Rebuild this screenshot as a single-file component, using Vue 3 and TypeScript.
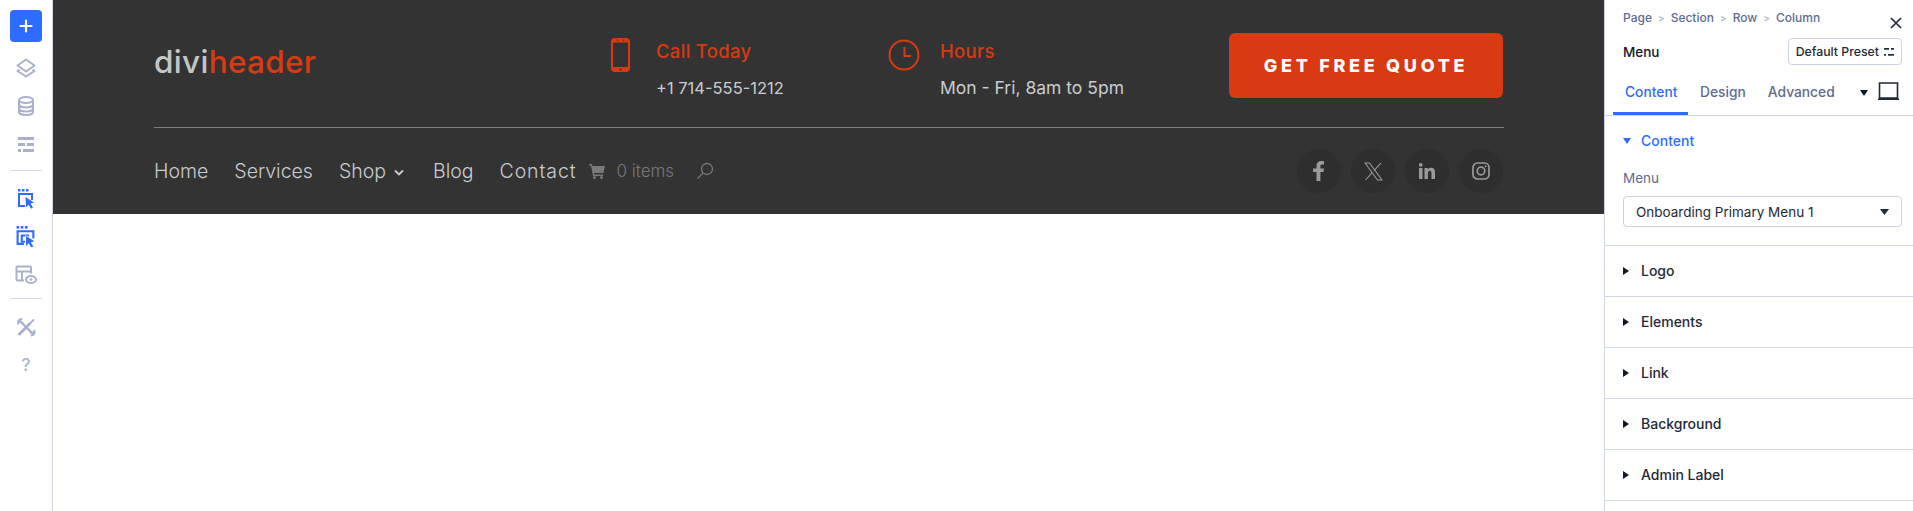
<script setup lang="ts">
const navItems = [
  { label: 'Home', caret: false },
  { label: 'Services', caret: false },
  { label: 'Shop', caret: true },
  { label: 'Blog', caret: false },
  { label: 'Contact', caret: false },
]
const sections = ['Logo', 'Elements', 'Link', 'Background', 'Admin Label']
const crumbs = ['Page', 'Section', 'Row', 'Column']
</script>

<template>
  <div class="app">
    <aside class="rail">
      <button class="add" type="button" aria-label="Add">
        <svg width="14" height="14" viewBox="0 0 14 14"><path d="M7 1.500v11M1.500 7h11" stroke="#fff" stroke-width="2.200" stroke-linecap="round" /></svg>
      </button>
      <div class="rail-group first">
        <svg class="ri" viewBox="0 0 20 20" fill="none" stroke="#a9b1cd" stroke-width="2" stroke-linejoin="round"><path d="M10 1.500l8.500 6-8.500 6-8.500-6z" /><path d="M3.500 11.500L1.500 13l8.500 5.500L18.500 13l-2-1.500" /></svg>
        <svg class="ri" viewBox="0 0 20 20" fill="none" stroke="#a9b1cd" stroke-width="2"><ellipse cx="10" cy="4" rx="7" ry="3" /><path d="M3 4v12c0 1.700 3.100 3 7 3s7-1.300 7-3V4M3 8.500c0 1.700 3.100 3 7 3s7-1.300 7-3M3 12.500c0 1.700 3.100 3 7 3s7-1.300 7-3" /></svg>
        <svg class="ri" viewBox="0 0 20 20" fill="#a9b1cd"><rect x="2" y="3" width="16" height="3" /><rect x="2" y="9" width="7" height="3" /><rect x="11" y="9" width="7" height="3" /><rect x="2" y="15" width="3" height="3" /><rect x="7" y="15" width="11" height="3" /></svg>
      </div>
      <hr class="rail-rule rule-a" />
      <div class="rail-group second">
        <svg class="ri" viewBox="0 0 20 20" fill="#2e6bff"><rect x="2" y="0" width="2.500" height="2.500" /><rect x="6" y="0" width="2.500" height="2.500" /><rect x="10" y="0" width="2.500" height="2.500" /><path d="M2 4h15v7h-2V6H4v10h5v2H2z" /><path stroke="#fff" stroke-width="1" paint-order="stroke" d="M9.500 8l8.500 5.500-3.500 1 2.500 4-2 1.200-2.300-4-2.700 2.500z" /></svg>
        <svg class="ri wide" viewBox="0 0 20 20" fill="#2e6bff"><rect x="1" y="0" width="2.500" height="2.500" /><rect x="5" y="0" width="2.500" height="2.500" /><rect x="9" y="0" width="2.500" height="2.500" /><path d="M1 4h17v8h-2V6H3v10h5v2H1z" /><path d="M5 8h8v2H7v4h2v2H5z" /><path stroke="#fff" stroke-width="1" paint-order="stroke" d="M10 9.500l8 5-3.500 1 2.500 4-2 1-2.300-4-2.700 2.500z" /></svg>
        <svg class="ri wide" viewBox="0 0 22 20" fill="none" stroke="#a9b1cd" stroke-width="2"><path d="M9 16H2.500a1 1 0 0 1-1-1V3a1 1 0 0 1 1-1H15a1 1 0 0 1 1 1v6M1.500 7H16M7 7v9" /><ellipse cx="16" cy="15" rx="5" ry="3.500" /><circle cx="16" cy="15" r="1.300" fill="#a9b1cd" stroke="none" /></svg>
      </div>
      <hr class="rail-rule rule-b" />
      <div class="rail-group third">
        <svg class="ri" viewBox="0 0 20 20" fill="none" stroke="#a9b1cd" stroke-linecap="round"><path d="M3.500 17L13.500 7" stroke-width="3" /><path d="M14 6.500l3.500-3.500" stroke-width="1.800" /><path d="M6 6l9 9" stroke-width="2.400" /><path d="M5.500 2A3.500 3.500 0 0 0 2 6.500L4.500 4 6.500 6" stroke-width="1.800" /><path d="M15.500 18.500A3.500 3.500 0 0 0 18.500 14L16 16.500 14 14.500" stroke-width="1.800" /></svg>
        <span class="q">?</span>
      </div>
    </aside>

    <main class="canvas">
      <header class="site">
        <div class="site-top">
          <div class="logo"><span class="logo-a">divi</span><span class="logo-b">header</span></div>
          <div class="contact call">
            <svg class="contact-ico" width="19" height="34" viewBox="0 0 19 34"><path fill-rule="evenodd" fill="#d83a12" d="M4 0h11a4 4 0 0 1 4 4v26a4 4 0 0 1-4 4H4a4 4 0 0 1-4-4V4a4 4 0 0 1 4-4zM2 4.500v24.500h15V4.500z" /><circle cx="9.500" cy="31.500" r="1" fill="#333" /><circle cx="6.500" cy="2.300" r=".8" fill="#333" /><circle cx="12.500" cy="2.300" r=".8" fill="#333" /></svg>
            <div class="contact-text">
              <div class="contact-title">Call Today</div>
              <div class="contact-line">+1 714-555-1212</div>
            </div>
          </div>
          <div class="contact hours">
            <svg class="contact-ico" width="32" height="32" viewBox="0 0 32 32" fill="none" stroke="#d83a12" stroke-width="2"><circle cx="16" cy="16" r="14.500" /><path d="M16.500 8v9H23" /></svg>
            <div class="contact-text">
              <div class="contact-title">Hours</div>
              <div class="contact-line">Mon - Fri, 8am to 5pm</div>
            </div>
          </div>
          <a class="cta">GET FREE QUOTE</a>
        </div>
        <div class="site-bottom">
          <nav class="nav">
            <span v-for="item in navItems" :key="item.label" class="nav-item">
              {{ item.label }}
              <svg v-if="item.caret" class="caret" width="10" height="7" viewBox="0 0 10 7" fill="none" stroke="#c9ccd0" stroke-width="1.800"><path d="M1 1.500l4 4 4-4" /></svg>
            </span>
          </nav>
          <div class="cart">
            <svg width="16" height="15" viewBox="0 0 16 15" fill="#77797b"><path d="M0 0h3l.5 2H16l-1.500 7H5l.3 1.500H14V12H4L2 1.500H0z" /><circle cx="5.500" cy="13.500" r="1.500" /><circle cx="12.500" cy="13.500" r="1.500" /></svg>
            <span>0 items</span>
          </div>
          <svg class="search" width="18" height="18" viewBox="0 0 18 18" fill="none" stroke="#77797b" stroke-width="1.300"><circle cx="11" cy="7" r="5.500" /><path d="M7 11l-5.500 5.500" /></svg>
          <div class="socials">
            <span class="soc"><svg width="12" height="20" viewBox="0 0 12 20" fill="#9a9a9a"><path d="M3.500 20V11H0V7.500h3.500V5c0-3.200 2-5 4.800-5 1.300 0 2.400.1 2.700.2v3.200H9.200C7.700 3.400 7.400 4.100 7.400 5.200v2.300h3.600L10.500 11H7.400v9z" /></svg></span>
            <span class="soc"><svg width="19" height="19" viewBox="0 0 19 19" fill="none" stroke="#9a9a9a" stroke-width="1.100"><path d="M1 1h4.500l12.500 17h-4.500z" /><path d="M17 1l-7 7.700M8 10.800L1.500 18" /></svg></span>
            <span class="soc"><svg width="16" height="16" viewBox="0 0 16 16" fill="#9a9a9a"><rect x="0" y="5" width="3.500" height="11" /><circle cx="1.750" cy="1.900" r="1.900" /><path d="M5.500 5h3.300v1.500C9.500 5.400 10.700 4.800 12 4.800c2.900 0 4 1.700 4 4.700V16h-3.500v-5.800c0-1.500-.5-2.400-1.700-2.400-1.300 0-1.900 1-1.900 2.400V16H5.500z" /></svg></span>
            <span class="soc"><svg width="18" height="18" viewBox="0 0 18 18" fill="none" stroke="#9a9a9a" stroke-width="1.700"><rect x="1" y="1" width="16" height="16" rx="4.500" /><circle cx="9" cy="9" r="3.800" /><circle cx="13.700" cy="4.300" r="1" fill="#9a9a9a" stroke="none" /></svg></span>
          </div>
        </div>
      </header>
    </main>

    <aside class="panel">
      <div class="panel-head">
        <div class="crumbs">
          <template v-for="(c, i) in crumbs" :key="c">
            <span v-if="i" class="sep">&gt;</span>
            <span>{{ c }}</span>
          </template>
        </div>
        <svg class="close" width="12" height="12" viewBox="0 0 12 12" stroke="#1f2937" stroke-width="1.700"><path d="M1 1l10 10M11 1L1 11" /></svg>
        <div class="title-row">
          <span class="title">Menu</span>
          <span class="preset">Default Preset
            <svg width="10" height="8" viewBox="0 0 10 8" fill="#1f2937"><rect x="0" y="0" width="5" height="1.700" /><rect x="7" y="0" width="3" height="1.700" /><rect x="0" y="6" width="2" height="1.700" /><rect x="4" y="6" width="6" height="1.700" /></svg>
          </span>
        </div>
        <div class="tabs">
          <span class="tab active">Content</span>
          <span class="tab">Design</span>
          <span class="tab">Advanced</span>
          <span class="tab-tools">
            <svg width="8" height="6" viewBox="0 0 8 6" fill="#111827"><path d="M0 0h8L4 6z" /></svg>
            <svg width="23" height="19" viewBox="0 0 23 19" fill="none" stroke="#1f2937" stroke-width="1.600"><path d="M2.500 1h18v15h-18zM1 17.200h21" /></svg>
          </span>
        </div>
      </div>
      <section class="group open">
        <div class="group-head blue">
          <svg width="8" height="6" viewBox="0 0 8 6" fill="#2e6bff"><path d="M0 0h8L4 6z" /></svg>
          <span>Content</span>
        </div>
        <div class="field-label">Menu</div>
        <div class="select">
          <span>Onboarding Primary Menu 1</span>
          <svg width="9" height="6" viewBox="0 0 9 6" fill="#1f2937"><path d="M0 0h9L4.500 6z" /></svg>
        </div>
      </section>
      <section v-for="s in sections" :key="s" class="group">
        <div class="group-head">
          <svg width="6" height="8" viewBox="0 0 6 8" fill="#111827"><path d="M0 0l6 4-6 4z" /></svg>
          <span>{{ s }}</span>
        </div>
      </section>
    </aside>
  </div>
</template>

<style>
html, body { margin: 0; background: #fff; overflow: hidden; }
</style>

<style scoped>
.app {
  display: flex;
  width: 1913px;
  height: 511px;
  overflow: hidden;
  font-family: Inter, "Liberation Sans", sans-serif;
  background: #fff;
}
.rail {
  flex: none;
  width: 52px;
  border-right: 1px solid #cdd3e6;
  display: flex;
  flex-direction: column;
  align-items: center;
  padding-top: 10px;
}
.add {
  width: 32px;
  height: 32px;
  padding: 0;
  border: 0;
  border-radius: 4px;
  background: #2e6bff;
  display: flex;
  align-items: center;
  justify-content: center;
}
.rail-group { display: flex; flex-direction: column; align-items: center; }
.rail-group.first { gap: 18px; margin-top: 16px; }
.rail-group.second { gap: 17px; margin-top: 18px; }
.rail-group.third { gap: 18px; margin-top: 18px; }
.ri { width: 20px; height: 20px; display: block; }
.ri.wide { width: 22px; height: 21px; }
.rail-rule {
  width: 31px;
  height: 1px;
  border: 0;
  background: #d3d8e8;
}
.rule-a { margin: 16px 0 0; }
.rule-b { margin: 13px 0 0; }
.q {
  font-size: 17px;
  line-height: 20px;
  font-weight: 500;
  color: #a9b1cd;
}
.canvas { flex: 1; min-width: 0; }
.site {
  height: 214px;
  box-sizing: border-box;
  padding: 0 100px 0 101px;
  background-color: #333333;
}
.site-top {
  height: 128px;
  box-sizing: border-box;
  display: flex;
  align-items: flex-start;
  border-bottom: 1px solid #7d7d7d;
}
.logo {
  flex: none;
  width: 457px;
  margin-top: 42px;
  font-size: 31.500px;
  line-height: 40px;
  font-weight: 500;
  letter-spacing: 0.300px;
}
.logo-a { color: #c4c6c8; }
.logo-b { color: #d83a12; }
.contact { display: flex; align-items: flex-start; flex: none; }
.call { width: 277px; margin-top: 38px; }
.call .contact-text { margin-left: 26px; }
.hours { width: 341px; margin-top: 37px; }
.hours .contact-text { margin-left: 20px; padding-top: 1px; }
.hours .contact-ico { margin-top: 2px; }
.contact-title {
  color: #d83a12;
  font-size: 18.500px;
  line-height: 26px;
  font-weight: 500;
  letter-spacing: 0.300px;
}
.contact-line {
  margin-top: 11px;
  color: #c9ccd0;
  font-size: 17.500px;
  line-height: 26px;
}
.call .contact-line { font-size: 16.500px; }
.cta {
  flex: none;
  width: 274px;
  height: 65px;
  margin-top: 33px;
  border-radius: 6px;
  background: #d83a12;
  display: flex;
  align-items: center;
  justify-content: center;
  color: #fff;
  font-size: 18px;
  font-weight: 800;
  letter-spacing: 3.700px;
}
.site-bottom {
  height: 86px;
  display: flex;
  align-items: center;
}
.nav { display: flex; gap: 26px; }
.nav-item {
  display: flex;
  align-items: center;
  gap: 8px;
  color: #c9ccd0;
  font-size: 19.500px;
  font-weight: 300;
  line-height: 28px;
}
.nav-item:last-child { letter-spacing: 0.900px; }
.caret { margin: 2px 3px 0 0; }
.cart {
  display: flex;
  align-items: center;
  gap: 11px;
  margin-left: 13px;
  color: #77797b;
  font-size: 17px;
  font-weight: 300;
}
.search { margin-left: 22px; }
.socials { display: flex; gap: 10px; margin-left: auto; margin-right: 1px; }
.soc {
  width: 44px;
  height: 44px;
  border-radius: 50%;
  background: #2e2e2e;
  display: flex;
  align-items: center;
  justify-content: center;
}
.panel {
  flex: none;
  width: 308px;
  border-left: 1px solid #cdd3e6;
  background: #fff;
  color: #111827;
}
.panel-head { position: relative; height: 116px; }
.crumbs {
  position: absolute;
  left: 18px;
  top: 11px;
  display: flex;
  align-items: center;
  gap: 6px;
  font-size: 12px;
  font-weight: 500;
  line-height: 14px;
  color: #5f6b8f;
}
.sep { color: #a9b1cd; font-size: 10px; }
.close { position: absolute; right: 11px; top: 17px; }
.title-row {
  position: absolute;
  left: 18px;
  right: 11px;
  top: 38px;
  display: flex;
  align-items: center;
  justify-content: space-between;
}
.title { font-size: 13.500px; font-weight: 500; color: #111827; }
.preset {
  height: 27px;
  box-sizing: border-box;
  padding: 0 7px;
  display: flex;
  align-items: center;
  gap: 5px;
  border: 1px solid #cdd3e6;
  border-radius: 4px;
  font-size: 12.300px;
  font-weight: 500;
  color: #1f2937;
}
.tabs {
  position: absolute;
  left: 0;
  right: 0;
  bottom: 0;
  height: 40px;
  display: flex;
  border-bottom: 1px solid #cdd3e6;
  box-sizing: border-box;
}
.tab {
  font-size: 13.800px;
  font-weight: 500;
  color: #5f6b8f;
  line-height: 33px;
  margin-left: 22px;
}
.tab.active {
  color: #2e6bff;
  margin-left: 8px;
  margin-right: -10px;
  padding: 0 12px;
  height: 39px;
  border-bottom: 3px solid #2e6bff;
  box-sizing: border-box;
  width: 75px;
}
.tab-tools {
  margin-left: auto;
  margin-right: 13px;
  display: flex;
  align-items: flex-start;
  gap: 9px;
  padding-top: 6px;
}
.tab-tools svg:first-child { margin-top: 8px; }
.group {
  border-bottom: 1px solid #d3d8e8;
  height: 51px;
  box-sizing: border-box;
}
.group.open { height: 130px; }
.group-head {
  height: 49px;
  display: flex;
  align-items: center;
  gap: 10px;
  padding-left: 18px;
  font-size: 14px;
  font-weight: 500;
  color: #1f2937;
}
.group-head svg { flex: none; width: 8px; }
.group-head:not(.blue) svg { width: 6px; margin-right: 2px; }
.group-head.blue { color: #2e6bff; }
.field-label {
  margin: 5px 0 0 18px;
  font-size: 13.500px;
  line-height: 16px;
  color: #5f6b8f;
}
.select {
  margin: 10px 11px 0 18px;
  height: 31px;
  box-sizing: border-box;
  border: 1px solid #cdd3e6;
  border-radius: 4px;
  padding: 0 12px;
  display: flex;
  align-items: center;
  justify-content: space-between;
  font-size: 13.500px;
  color: #1f2937;
}
</style>
